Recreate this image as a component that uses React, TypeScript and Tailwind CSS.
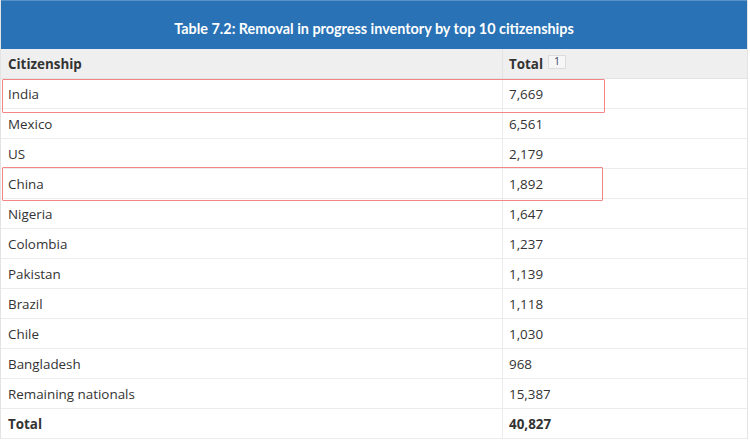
import React from 'react';

interface Row {
  name: string;
  total: string;
  bold?: boolean;
}

const rows: Row[] = [
  { name: 'India', total: '7,669' },
  { name: 'Mexico', total: '6,561' },
  { name: 'US', total: '2,179' },
  { name: 'China', total: '1,892' },
  { name: 'Nigeria', total: '1,647' },
  { name: 'Colombia', total: '1,237' },
  { name: 'Pakistan', total: '1,139' },
  { name: 'Brazil', total: '1,118' },
  { name: 'Chile', total: '1,030' },
  { name: 'Bangladesh', total: '968' },
  { name: 'Remaining nationals', total: '15,387' },
  { name: 'Total', total: '40,827', bold: true },
];

const App: React.FC = () => {
  return (
    <div className="relative w-[750px] h-[440px] bg-white overflow-hidden font-['Open_Sans',sans-serif] text-[13.4px] text-[#333]">
      <div className="w-[748px] border-l border-r border-[#e3e3e3]">
        {/* Caption */}
        <div className="h-[49px] bg-[#2872b5] border-t border-[#5b93c8] flex items-center justify-center pt-[7px]">
          <h2 className="font-['Lato',sans-serif] font-bold text-[14.4px] text-white">
            Table 7.2: Removal in progress inventory by top 10 citizenships
          </h2>
        </div>

        {/* Header row */}
        <div className="flex h-[30px] bg-[#efefef] border-b border-[#e3e3e3] font-bold">
          <div className="w-[502px] border-r border-[#e3e3e3] flex items-center pl-[7px] pt-[2px]">Citizenship</div>
          <div className="flex-1 flex items-center pl-[6px] pt-[2px] gap-[5px]">
            <span>Total</span>
            <span className="w-[18px] h-[14px] -mt-[6px] flex items-center justify-center border border-[#dcdcdc] bg-[#f6f6f6] text-[10.5px] font-normal text-[#3a4560]">
              1
            </span>
          </div>
        </div>

        {rows.map((r) => (
          <div key={r.name} className={`flex h-[30px] border-b border-[#ececec] ${r.bold ? 'font-bold' : ''}`}>
            <div className="w-[502px] border-r border-[#ececec] flex items-center pl-[7px] pt-[2px]">{r.name}</div>
            <div className="flex-1 flex items-center pl-[6px] pt-[2px]">{r.total}</div>
          </div>
        ))}
      </div>

      {/* Annotation boxes */}
      <div className="absolute left-[2px] top-[79px] w-[603px] h-[34px] border-[1.5px] border-[#f28686] rounded-[1px]" />
      <div className="absolute left-[2px] top-[167px] w-[601px] h-[34px] border-[1.5px] border-[#f28686] rounded-[1px]" />
    </div>
  );
};

export default App;
